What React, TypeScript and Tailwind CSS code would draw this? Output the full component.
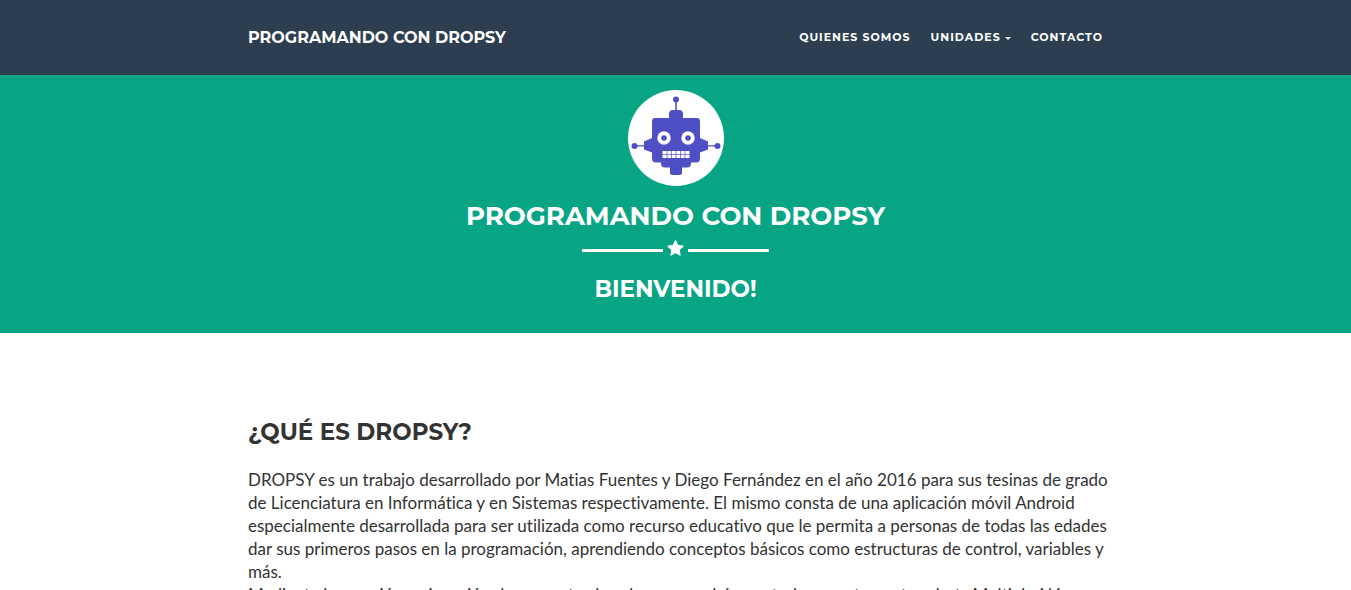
import React from "react";

const heading = "font-['Montserrat','Inter',sans-serif] font-bold uppercase";

function Robot() {
  return (
    <svg viewBox="0 0 96 96" className="size-24" role="img" aria-label="Dropsy">
      <circle cx="48" cy="48" r="48" fill="#fff" />
      <g fill="#4e4fc4">
        <circle cx="48" cy="9.500" r="3" />
        <rect x="47.300" y="11" width="1.500" height="10" />
        <path d="M41 28v-4q0-4 4-4h6q4 0 4 4v4h14q3 0 3 4v16l8 3.500v8l-8 3v6q0 4-4 4h-5v1q0 4-4 4h-5v6q0 1.500-6 1.500t-6-1.500v-6h-5q-4 0-4-4v-1h-5q-4 0-4-4v-6l-8-3v-8l8-3.500V32q0-4 3-4z" />
        <path d="M6 55.200h10v1.400H6zM80 55.200h10v1.400H80z" />
        <circle cx="6.500" cy="56" r="3" />
        <circle cx="89.500" cy="56" r="3" />
      </g>
      <g fill="#fff">
        <circle cx="36" cy="48" r="6.700" />
        <circle cx="60" cy="48" r="6.700" />
        <rect x="34.500" y="61" width="27" height="7" />
      </g>
      <circle cx="36" cy="48" r="2.800" fill="#4e4fc4" />
      <circle cx="60" cy="48" r="2.800" fill="#4e4fc4" />
      <path
        d="M34.500 64.500h27M39 61v7M43.500 61v7M48 61v7M52.500 61v7M57 61v7"
        stroke="#4e4fc4"
        strokeWidth="0.7"
      />
    </svg>
  );
}

function StarDivider() {
  return (
    <div className="flex items-center justify-center gap-1" aria-hidden="true">
      <span className="mt-1 h-[3px] w-[81px] bg-white" />
      <svg viewBox="0 0 17 16" className="h-4 w-[17px]" fill="#fff">
        <path
          d="M8.500 .8l2.200 4.700 5.200.7-3.800 3.600.9 5.200-4.500-2.500L4 15l.9-5.200L1.100 6.200l5.200-.7z"
          stroke="#fff"
          strokeWidth="1.300"
          strokeLinejoin="round"
        />
      </svg>
      <span className="mt-1 h-[3px] w-[81px] bg-white" />
    </div>
  );
}

export default function App() {
  return (
    <div className="h-screen overflow-hidden bg-white font-['Lato',sans-serif] text-[#333]">
      <nav className="bg-[#2c3e50] text-white">
        <div className="mx-auto flex h-[75px] max-w-[855px] items-center justify-between">
          <a href="#inicio" className={`${heading} text-base`}>
            Programando con Dropsy
          </a>
          <ul className={`${heading} flex gap-5 text-[11px] tracking-[1px]`}>
            <li><a href="#quienes">Quienes somos</a></li>
            <li>
              <button type="button" className="flex items-center gap-1 font-bold uppercase tracking-[1px]">
                Unidades
                <svg viewBox="0 0 6 3" className="mt-[2px] h-[3px] w-[6px]" fill="currentColor" aria-hidden="true">
                  <path d="M0 0h6L3 3z" />
                </svg>
              </button>
            </li>
            <li><a href="#contacto">Contacto</a></li>
          </ul>
        </div>
      </nav>
      <header className="flex flex-col items-center bg-[#08a585] pt-[15px] pb-[30px] text-center text-white">
        <Robot />
        <h1 className={`${heading} mt-[14px] text-[26px] leading-8`}>Programando con Dropsy</h1>
        <div className="mt-2 mb-[19px]">
          <StarDivider />
        </div>
        <h2 className={`${heading} text-[23px] leading-7`}>Bienvenido!</h2>
      </header>
      <main className="mx-auto max-w-[855px] pt-[84px]">
        <h2 className={`${heading} mb-[21px] text-[23px] leading-[30px]`}>¿Qué es Dropsy?</h2>
        <p className="-mr-3 text-[17px] leading-[23px] [font-variant-ligatures:none]">
          DROPSY es un trabajo desarrollado por Matias Fuentes y Diego Fernández en el año 2016 para sus tesinas de
          grado de Licenciatura en Informática y en Sistemas respectivamente. El mismo consta de una aplicación móvil
          Android especialmente desarrollada para ser utilizada como recurso educativo que le permita a personas de
          todas las edades dar sus primeros pasos en la programación, aprendiendo conceptos básicos como estructuras
          de control, variables y más.
          <br />
          Mediante la creación y ejecución de proyectos los alumnos podrán controlar remotamente robots Multiplo N6
        </p>
      </main>
    </div>
  );
}
